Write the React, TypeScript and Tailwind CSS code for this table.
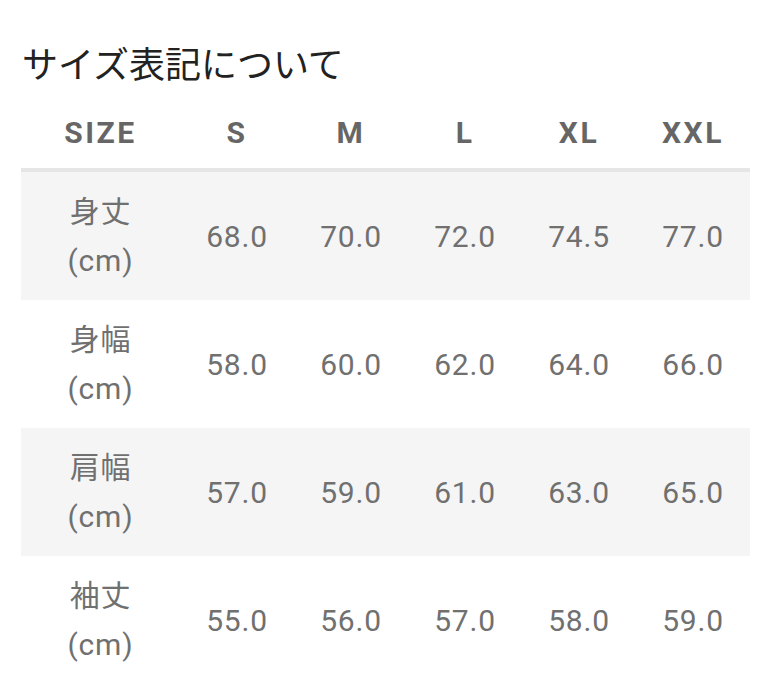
const sizes = ["S", "M", "L", "XL", "XXL"];

const rows = [
  { label: "身丈", values: ["68.0", "70.0", "72.0", "74.5", "77.0"] },
  { label: "身幅", values: ["58.0", "60.0", "62.0", "64.0", "66.0"] },
  { label: "肩幅", values: ["57.0", "59.0", "61.0", "63.0", "65.0"] },
  { label: "袖丈", values: ["55.0", "56.0", "57.0", "58.0", "59.0"] },
];

export default function App() {
  return (
    <div className="w-[765px] h-[684px] overflow-hidden bg-white font-['Roboto','Noto_Sans_CJK_JP',sans-serif]">
      <h1 className="pt-[42px] pl-[22px] text-[36px] leading-[48px] text-[#222] font-normal">
        サイズ表記について
      </h1>

      <div className="mx-[21px] w-[729px]">
        {/* header */}
        <div className="grid grid-cols-[159px_repeat(5,114px)] h-[82px] pt-[6px] items-center border-b-4 border-[#e6e6e6] text-[30px] font-bold text-[#666] tracking-[2.5px]">
          <div className="text-center">SIZE</div>
          {sizes.map((s) => (
            <div key={s} className="text-center">
              {s}
            </div>
          ))}
        </div>

        {rows.map((row, i) => (
          <div
            key={row.label}
            className={`grid grid-cols-[159px_repeat(5,114px)] h-[128px] items-center text-[30px] text-[#707070] tracking-[0.8px] ${
              i % 2 === 0 ? "bg-[#f5f5f5]" : "bg-white"
            }`}
          >
            <div className="text-center leading-[49px]">
              <div>{row.label}</div>
              <div>(cm)</div>
            </div>
            {row.values.map((v, j) => (
              <div key={j} className="text-center">
                {v}
              </div>
            ))}
          </div>
        ))}
      </div>
    </div>
  );
}
